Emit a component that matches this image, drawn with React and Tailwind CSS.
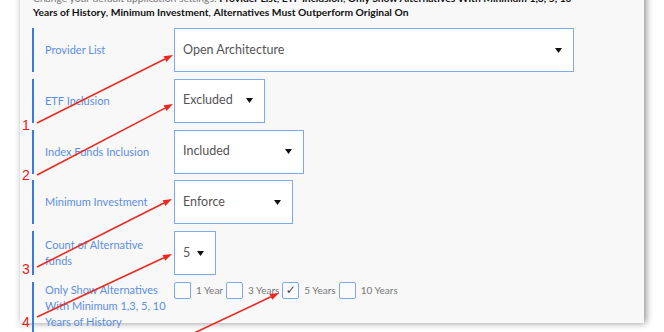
const blue = "border-[#7ea9ee]";

function Caret() {
  return (
    <svg width="7" height="5" viewBox="0 0 7 5" className="shrink-0">
      <polygon points="0,0 7,0 3.5,5" fill="#111" />
    </svg>
  );
}

function SelectBox({ value, width }) {
  return (
    <div
      className={`flex h-full items-center justify-between border ${blue} bg-white pl-[8px] pr-[11px] text-[12.5px] text-[#555]`}
      style={{ width }}
    >
      <span>{value}</span>
      <Caret />
    </div>
  );
}

function Row({ label, children, tall }) {
  return (
    <div className={`flex ${tall ? "h-[60px] items-start" : "h-[44px] items-stretch"}`}>
      <div
        className={`flex w-[142px] shrink-0 border-l-2 border-[#3a78e4] pl-[11px] pr-2 text-[11px] leading-[16px] text-[#5b8fe6] ${
          tall ? "h-full items-start" : "items-center"
        }`}
      >
        <span>{label}</span>
      </div>
      {children}
    </div>
  );
}

function Check({ label, checked }) {
  return (
    <div className="flex items-center">
      <div className={`flex h-[17px] w-[17px] items-center justify-center rounded-[2px] border ${blue} bg-[#fbfbfb] font-['DejaVu_Sans',sans-serif] text-[12px] leading-none text-[#444]`}>
        {checked ? "✓" : ""}
      </div>
      <span className="ml-[5px] mr-[3px] text-[10px] text-[#777]">{label}</span>
    </div>
  );
}

function Arrow({ x1, y1, x2, y2 }) {
  const a = Math.atan2(y2 - y1, x2 - x1);
  const l = 9;
  const w = 3.2;
  const bx = x2 - l * Math.cos(a);
  const by = y2 - l * Math.sin(a);
  const px = -Math.sin(a) * w;
  const py = Math.cos(a) * w;
  return (
    <g>
      <line x1={x1} y1={y1} x2={bx} y2={by} stroke="#ea2a20" strokeWidth="1.6" />
      <polygon points={`${x2},${y2} ${bx + px},${by + py} ${bx - px},${by - py}`} fill="#ea2a20" />
    </g>
  );
}

export default function App() {
  return (
    <div className="relative h-[332px] w-[664px] overflow-hidden bg-white font-['Lato',sans-serif]">
      <div className="ml-[20px] h-full w-[624px] bg-[#f8f8f8] pl-[12px] shadow-[2px_0_7px_rgba(0,0,0,0.45)]">
        <div className="-mt-[9px] pl-[1px] text-[10.3px] leading-[14px] text-[#111]">
          <span className="text-[#777]">Change your default application settings: </span>
          <b>Provider List</b>, <b>ETF Inclusion</b>, <b>Only Show Alternatives With Minimum 1,3, 5, 10</b>
          <br />
          <b>Years of History</b>, <b>Minimum Investment</b>, <b>Alternatives Must Outperform Original On</b>
        </div>
        <div className="mt-[9px] flex flex-col gap-[6.8px]">
          <Row label="Provider List">
            <SelectBox value="Open Architecture" width={400} />
          </Row>
          <Row label="ETF Inclusion">
            <SelectBox value="Excluded" width={91} />
          </Row>
          <Row label="Index Funds Inclusion">
            <SelectBox value="Included" width={130} />
          </Row>
          <Row label="Minimum Investment">
            <SelectBox value="Enforce" width={119} />
          </Row>
          <Row label="Count of Alternative funds">
            <SelectBox value="5" width={42} />
          </Row>
          <Row label="Only Show Alternatives With Minimum 1,3, 5, 10 Years of History" tall>
            <div className="flex items-center">
              <Check label="1 Year" />
              <Check label="3 Years" />
              <Check label="5 Years" checked />
              <Check label="10 Years" />
            </div>
          </Row>
        </div>
      </div>

      {/* annotation overlay */}
      <svg className="pointer-events-none absolute left-0 top-0" width="664" height="332">
        <Arrow x1={37} y1={123} x2={173} y2={55} />
        <Arrow x1={37} y1={175} x2={173} y2={104} />
        <Arrow x1={37} y1={267} x2={172} y2={199} />
        <Arrow x1={37} y1={317} x2={172} y2={254} />
        <Arrow x1={192} y1={334} x2={279} y2={293} />
      </svg>
      <span className="absolute left-[22px] top-[118px] font-['Liberation_Sans',sans-serif] text-[14px] leading-none text-[#e3231b]">1</span>
      <span className="absolute left-[22px] top-[168px] font-['Liberation_Sans',sans-serif] text-[14px] leading-none text-[#e3231b]">2</span>
      <span className="absolute left-[22px] top-[262px] font-['Liberation_Sans',sans-serif] text-[14px] leading-none text-[#e3231b]">3</span>
      <span className="absolute left-[22px] top-[315px] font-['Liberation_Sans',sans-serif] text-[14px] leading-none text-[#e3231b]">4</span>
    </div>
  );
}
